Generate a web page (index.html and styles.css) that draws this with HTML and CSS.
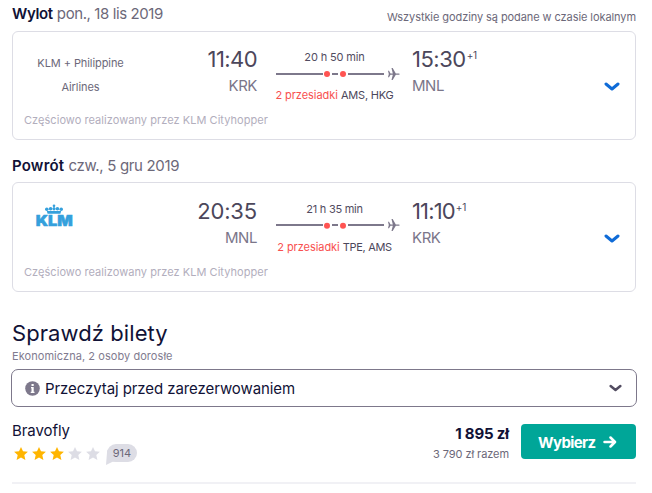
FILE: index.html
```
<!DOCTYPE html>
<html lang="pl">
<head>
<meta charset="utf-8">
<title>Sprawdź bilety</title>
<link rel="stylesheet" href="styles.css">
</head>
<body>
<svg width="0" height="0" class="sprite" aria-hidden="true">
  <symbol id="plane" viewBox="0 0 12 12">
    <path d="M0 2.800h1l1.500 2.600h2.300L3.500 0h1.200l3.100 5.400h2.900c1.400 0 1.400 1.300 0 1.300H7.800L4.700 12H3.500l1.300-5.300H2.500L1 9.200H0L.8 6z"/>
  </symbol>
  <symbol id="chevron" viewBox="0 0 16 9">
    <path d="M2 2l6 5 6-5" fill="none" stroke="currentColor" stroke-width="3" stroke-linecap="round" stroke-linejoin="round"/>
  </symbol>
  <symbol id="star" viewBox="0 0 14 13">
    <path d="M7 0l2 4.300 4.900.5-3.600 3.300 1.100 4.800L7 10.600l-4.400 2.300 1.100-4.800L.1 4.800 5 4.300z"/>
  </symbol>
</svg>
<main class="page">
  <section class="leg">
    <header class="leg-head">
      <h2 class="leg-title"><b class="out">Wylot</b> <span class="date-out">pon., 18 lis 2019</span></h2>
      <p class="local-note">Wszystkie godziny są podane w czasie lokalnym</p>
    </header>
    <div class="card">
      <div class="carrier carrier-name">KLM + Philippine<br>Airlines</div>
      <div class="point depart"><span class="time t1140">11:40</span><span class="code">KRK</span></div>
      <div class="route">
        <span class="duration">20 h 50 min</span>
        <svg class="line" viewBox="0 0 124 14"><path class="rule" d="M0 7h47M56 7h6M72 7h36"/><circle cx="51" cy="7" r="3"/><circle cx="67" cy="7" r="3"/><use href="#plane" x="112" y="1" width="12" height="12"/></svg>
        <span class="stops"><em>2 przesiadki</em> <span class="via">AMS, HKG</span></span>
      </div>
      <div class="point arrive"><span class="time t1530">15:30<sup>+1</sup></span><span class="code">MNL</span></div>
      <svg class="expand"><use href="#chevron"/></svg>
      <p class="operator">Częściowo realizowany przez KLM Cityhopper</p>
    </div>
  </section>

  <section class="leg leg-back">
    <header class="leg-head">
      <h2 class="leg-title"><b class="back">Powrót</b> <span class="date-back">czw., 5 gru 2019</span></h2>
    </header>
    <div class="card">
      <div class="carrier">
        <svg class="klm" viewBox="0 0 38 24" role="img" aria-label="KLM">
          <circle cx="19" cy="1.800" r="1.300"/><path d="M18.500 2h1v3h-1z"/>
          <circle cx="11.800" cy="5.200" r="1.800"/><circle cx="15.600" cy="4.800" r="1.800"/><circle cx="19" cy="4.800" r="1.600"/><circle cx="22.400" cy="4.800" r="1.800"/><circle cx="26.200" cy="5.200" r="1.800"/>
          <path d="M11.800 7h14.400l-.8 2.800H12.600z"/>
          <text x=".8" y="21.500" textLength="37" lengthAdjust="spacingAndGlyphs">KLM</text>
        </svg>
      </div>
      <div class="point depart"><span class="time t2035">20:35</span><span class="code">MNL</span></div>
      <div class="route">
        <span class="duration d2">21 h 35 min</span>
        <svg class="line" viewBox="0 0 124 14"><path class="rule" d="M0 6h47M56 6h6M72 6h36"/><circle cx="51" cy="6.800" r="3"/><circle cx="67" cy="6.800" r="3"/><use href="#plane" x="112" y="0" width="12" height="12"/></svg>
        <span class="stops"><em>2 przesiadki</em> <span class="via via2">TPE, AMS</span></span>
      </div>
      <div class="point arrive"><span class="time t1110">11:10<sup>+1</sup></span><span class="code">KRK</span></div>
      <svg class="expand"><use href="#chevron"/></svg>
      <p class="operator">Częściowo realizowany przez KLM Cityhopper</p>
    </div>
  </section>

  <section class="tickets">
    <h1>Sprawdź bilety</h1>
    <p class="cabin">Ekonomiczna, 2 osoby dorosłe</p>
    <div class="notice">
      <svg class="info" viewBox="0 0 15 15"><circle cx="7.500" cy="7.500" r="7.300"/><path d="M6.500 3h2.200v2H6.500zM6 6h2.700v4.800h.8V12H5.700v-1.200h.8V7.200H6z"/></svg>
      <span class="notice-text">Przeczytaj przed zarezerwowaniem</span>
      <svg class="notice-chevron"><use href="#chevron"/></svg>
    </div>
    <div class="offer">
      <div class="agent">
        <span class="agent-name">Bravofly</span>
        <div class="rating">
          <svg class="star"><use href="#star"/></svg><svg class="star"><use href="#star"/></svg><svg class="star"><use href="#star"/></svg><svg class="star off"><use href="#star"/></svg><svg class="star off"><use href="#star"/></svg>
          <span class="reviews">914</span>
        </div>
      </div>
      <div class="price"><strong>1 895 zł</strong><span>3 790 zł razem</span></div>
      <button class="select" type="button"><span>Wybierz</span><svg viewBox="0 0 14 12"><path d="M1.500 6h10M7.500 1.500L12 6l-4.500 4.500"/></svg></button>
    </div>
  </section>
</main>
</body>
</html>
```
FILE: styles.css
```
* { box-sizing: border-box; margin: 0; padding: 0; }
body { background: #fff; color: #6c6879; font: 11px/16px Inter, "Liberation Sans", sans-serif; overflow: hidden; }
svg { display: block; flex: none; }
.sprite { position: absolute; }
.page { width: 652px; padding: 4px 16px 0 12px; }

.leg-head { display: flex; justify-content: space-between; height: 27px; }
.leg-back { margin-top: 16px; }
.leg-back .leg-head { height: 26px; }
.leg-title { font-size: 15px; line-height: 20px; font-weight: 400; white-space: nowrap; }
.leg-title b { color: #111236; font-weight: 600; }
.out { letter-spacing: -.38px; }
.back { letter-spacing: .2px; }
.date-out { letter-spacing: -.4px; }
.date-back { letter-spacing: -.33px; }
.local-note { padding-top: 5px; letter-spacing: -.08px; }

.card {
  display: grid;
  grid-template-columns: 135px 109px 155px 192px 16px;
  grid-template-rows: 66px 16px;
  height: 109px;
  padding: 14px 15px 0 0;
  border: 1px solid #dddde5;
  border-radius: 6px;
}
.leg-back .card { height: 110px; padding-top: 15px; }
.carrier { padding-top: 5px; text-align: center; }
.carrier-name { line-height: 24px; letter-spacing: -.08px; }
.klm { width: 38px; height: 24px; margin: 1px 0 0 22px; fill: #35a0dc; }
.klm text { font: 900 14.500px Inter, sans-serif; stroke: #35a0dc; stroke-width: .5; }
.point { display: flex; flex-direction: column; }
.depart { align-items: flex-end; }
.time { font-size: 22px; line-height: 26px; color: #4c475b; }
.time sup { margin-left: 1px; font-size: 10px; line-height: 0; letter-spacing: -.3px; vertical-align: 8px; }
.t1140 { letter-spacing: -.58px; }
.t2035 { letter-spacing: -.15px; }
.t1530 { letter-spacing: -.5px; }
.t1110 { letter-spacing: -.85px; }
.code { margin-top: 3px; color: #7b768a; font-size: 15px; line-height: 22px; letter-spacing: -.45px; }
.route { display: flex; flex-direction: column; align-items: center; padding-top: 3px; white-space: nowrap; }
.duration { color: #524c61; letter-spacing: -.14px; }
.d2 { letter-spacing: -.27px; }
.line { width: 124px; height: 14px; margin: 2px 0 6px 6px; fill: #7d788b; }
.line circle { fill: #ff5452; }
.rule { stroke: #7d788b; stroke-width: 2; }
.stops { color: #4c475b; }
.stops em { color: #f8504f; font-style: normal; letter-spacing: -.05px; }
.via { letter-spacing: -.2px; }
.via2 { letter-spacing: -.33px; }
.expand { width: 16px; height: 9px; margin-top: 36px; color: #0f6bd7; }
.operator { grid-column: 1 / -1; padding-left: 11px; color: #b2aebd; letter-spacing: .05px; }

.tickets { padding-top: 27px; }
h1 { color: #111236; font-size: 22px; line-height: 28px; font-weight: 400; letter-spacing: .08px; }
.cabin { margin-top: 1px; color: #817b8f; letter-spacing: .06px; }
.notice {
  display: flex; align-items: center;
  height: 38px; margin: 5px -1px 0; padding: 0 14px 0 13px;
  border: 1px solid #7d788b; border-radius: 7px;
  color: #111236; font-size: 15px; letter-spacing: -.08px;
}
.notice-text { padding-top: 2px; }
.info { width: 15px; height: 15px; margin-right: 5px; fill: #7d788b; }
.info path { fill: #fff; }
.notice-chevron { width: 13px; height: 8px; margin-left: auto; color: #524c61; }
.offer { display: flex; height: 77px; padding-top: 17px; border-bottom: 2px solid #f1f1f5; }
.agent { margin-top: -1px; }
.agent-name { display: block; color: #111236; font-size: 15px; line-height: 16px; letter-spacing: -.07px; }
.rating { display: flex; gap: 4px; padding: 8px 0 0 2px; }
.star { width: 14px; height: 13px; fill: #ffb500; }
.star.off { fill: #dddde5; }
.reviews { position: relative; width: 30px; height: 18px; margin: -3px 0 0 3px; border-radius: 9px; background: #dddde5; line-height: 18px; text-align: center; }
.reviews::before { content: ""; position: absolute; left: -1px; bottom: -3px; width: 12px; height: 15px; background: #dddde5; clip-path: polygon(10% 0, 100% 79%, 55% 79%, 0 100%); }
.price { display: flex; flex-direction: column; margin-left: auto; padding-top: 1px; text-align: right; white-space: nowrap; }
.price strong { color: #111236; font-size: 15px; line-height: 18px; letter-spacing: -.19px; }
.price span { margin-top: 3px; letter-spacing: -.07px; }
.select { display: flex; align-items: center; width: 115px; height: 35px; margin-left: 12px; padding-left: 17px; border: 0; border-radius: 4px; background: #00a698; color: #fff; font: 700 15px/20px Inter, sans-serif; letter-spacing: -.6px; }
.select span { padding-top: 2px; }
.select svg { width: 14px; height: 12px; margin-left: 7px; fill: none; stroke: #fff; stroke-width: 2.500; stroke-linecap: round; stroke-linejoin: round; }
```
